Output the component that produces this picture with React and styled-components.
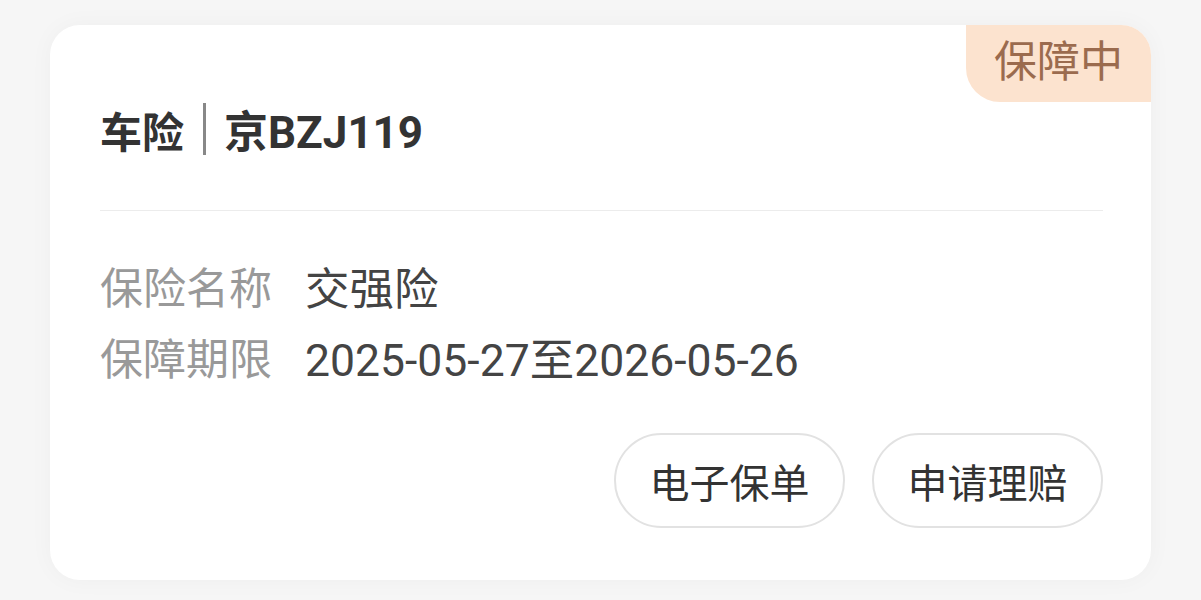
import React from 'react'
import styled, { createGlobalStyle } from 'styled-components'

const GlobalStyle = createGlobalStyle`
  html, body {
    margin: 0;
    padding: 0;
    background: #f6f6f6;
    font-family: Roboto, "Noto Sans CJK SC", sans-serif;
  }
`

const Page = styled.div`
  width: 1201px;
  height: 600px;
  padding: 25px 50px 20px 50px;
  box-sizing: border-box;
`

const Card = styled.div`
  position: relative;
  background: #ffffff;
  border-radius: 30px;
  padding: 74px 48px 52px 50px;
  box-shadow: 0 0 24px rgba(0, 0, 0, 0.035);
  overflow: hidden;
`

const Badge = styled.div`
  position: absolute;
  top: 0;
  right: 0;
  width: 185px;
  height: 77px;
  background: #fce3cf;
  color: #9b6b4e;
  font-size: 43px;
  line-height: 74px;
  text-align: center;
  border-bottom-left-radius: 34px;
`

const Title = styled.div`
  display: flex;
  align-items: center;
  height: 60px;
  font-size: 42px;
  font-weight: 700;
  color: #333333;
`

const Plate = styled.span`
  font-size: 44px;
`

const Sep = styled.span`
  width: 3px;
  height: 52px;
  background: #888888;
  margin: 0 18px 0 19px;
`

const Divider = styled.div`
  height: 1px;
  background: #ececec;
  margin-top: 51px;
`

const Info = styled.div`
  margin-top: 39px;
  display: flex;
  flex-direction: column;
  gap: 1px;
`

const Row = styled.div`
  display: flex;
  align-items: center;
  height: 70px;
  font-size: 43px;
`

const Label = styled.span`
  width: 205px;
  flex-shrink: 0;
  color: #999999;
`

const Value = styled.span`
  color: #444444;
  font-size: 44.5px;
`

const Actions = styled.div`
  margin-top: 42px;
  display: flex;
  justify-content: flex-end;
  gap: 27px;
`

const Button = styled.button`
  width: 231px;
  height: 95px;
  border: 2px solid #e2e2e2;
  border-radius: 48px;
  background: #ffffff;
  color: #333333;
  font-family: inherit;
  font-size: 40px;
  padding: 0;
`

export default function App() {
  return (
    <>
      <GlobalStyle />
      <Page>
        <Card>
          <Badge>保障中</Badge>
          <Title>
            车险
            <Sep />
            <Plate>京BZJ119</Plate>
          </Title>
          <Divider />
          <Info>
            <Row>
              <Label>保险名称</Label>
              <Value>交强险</Value>
            </Row>
            <Row>
              <Label>保障期限</Label>
              <Value>2025-05-27至2026-05-26</Value>
            </Row>
          </Info>
          <Actions>
            <Button>电子保单</Button>
            <Button>申请理赔</Button>
          </Actions>
        </Card>
      </Page>
    </>
  )
}
